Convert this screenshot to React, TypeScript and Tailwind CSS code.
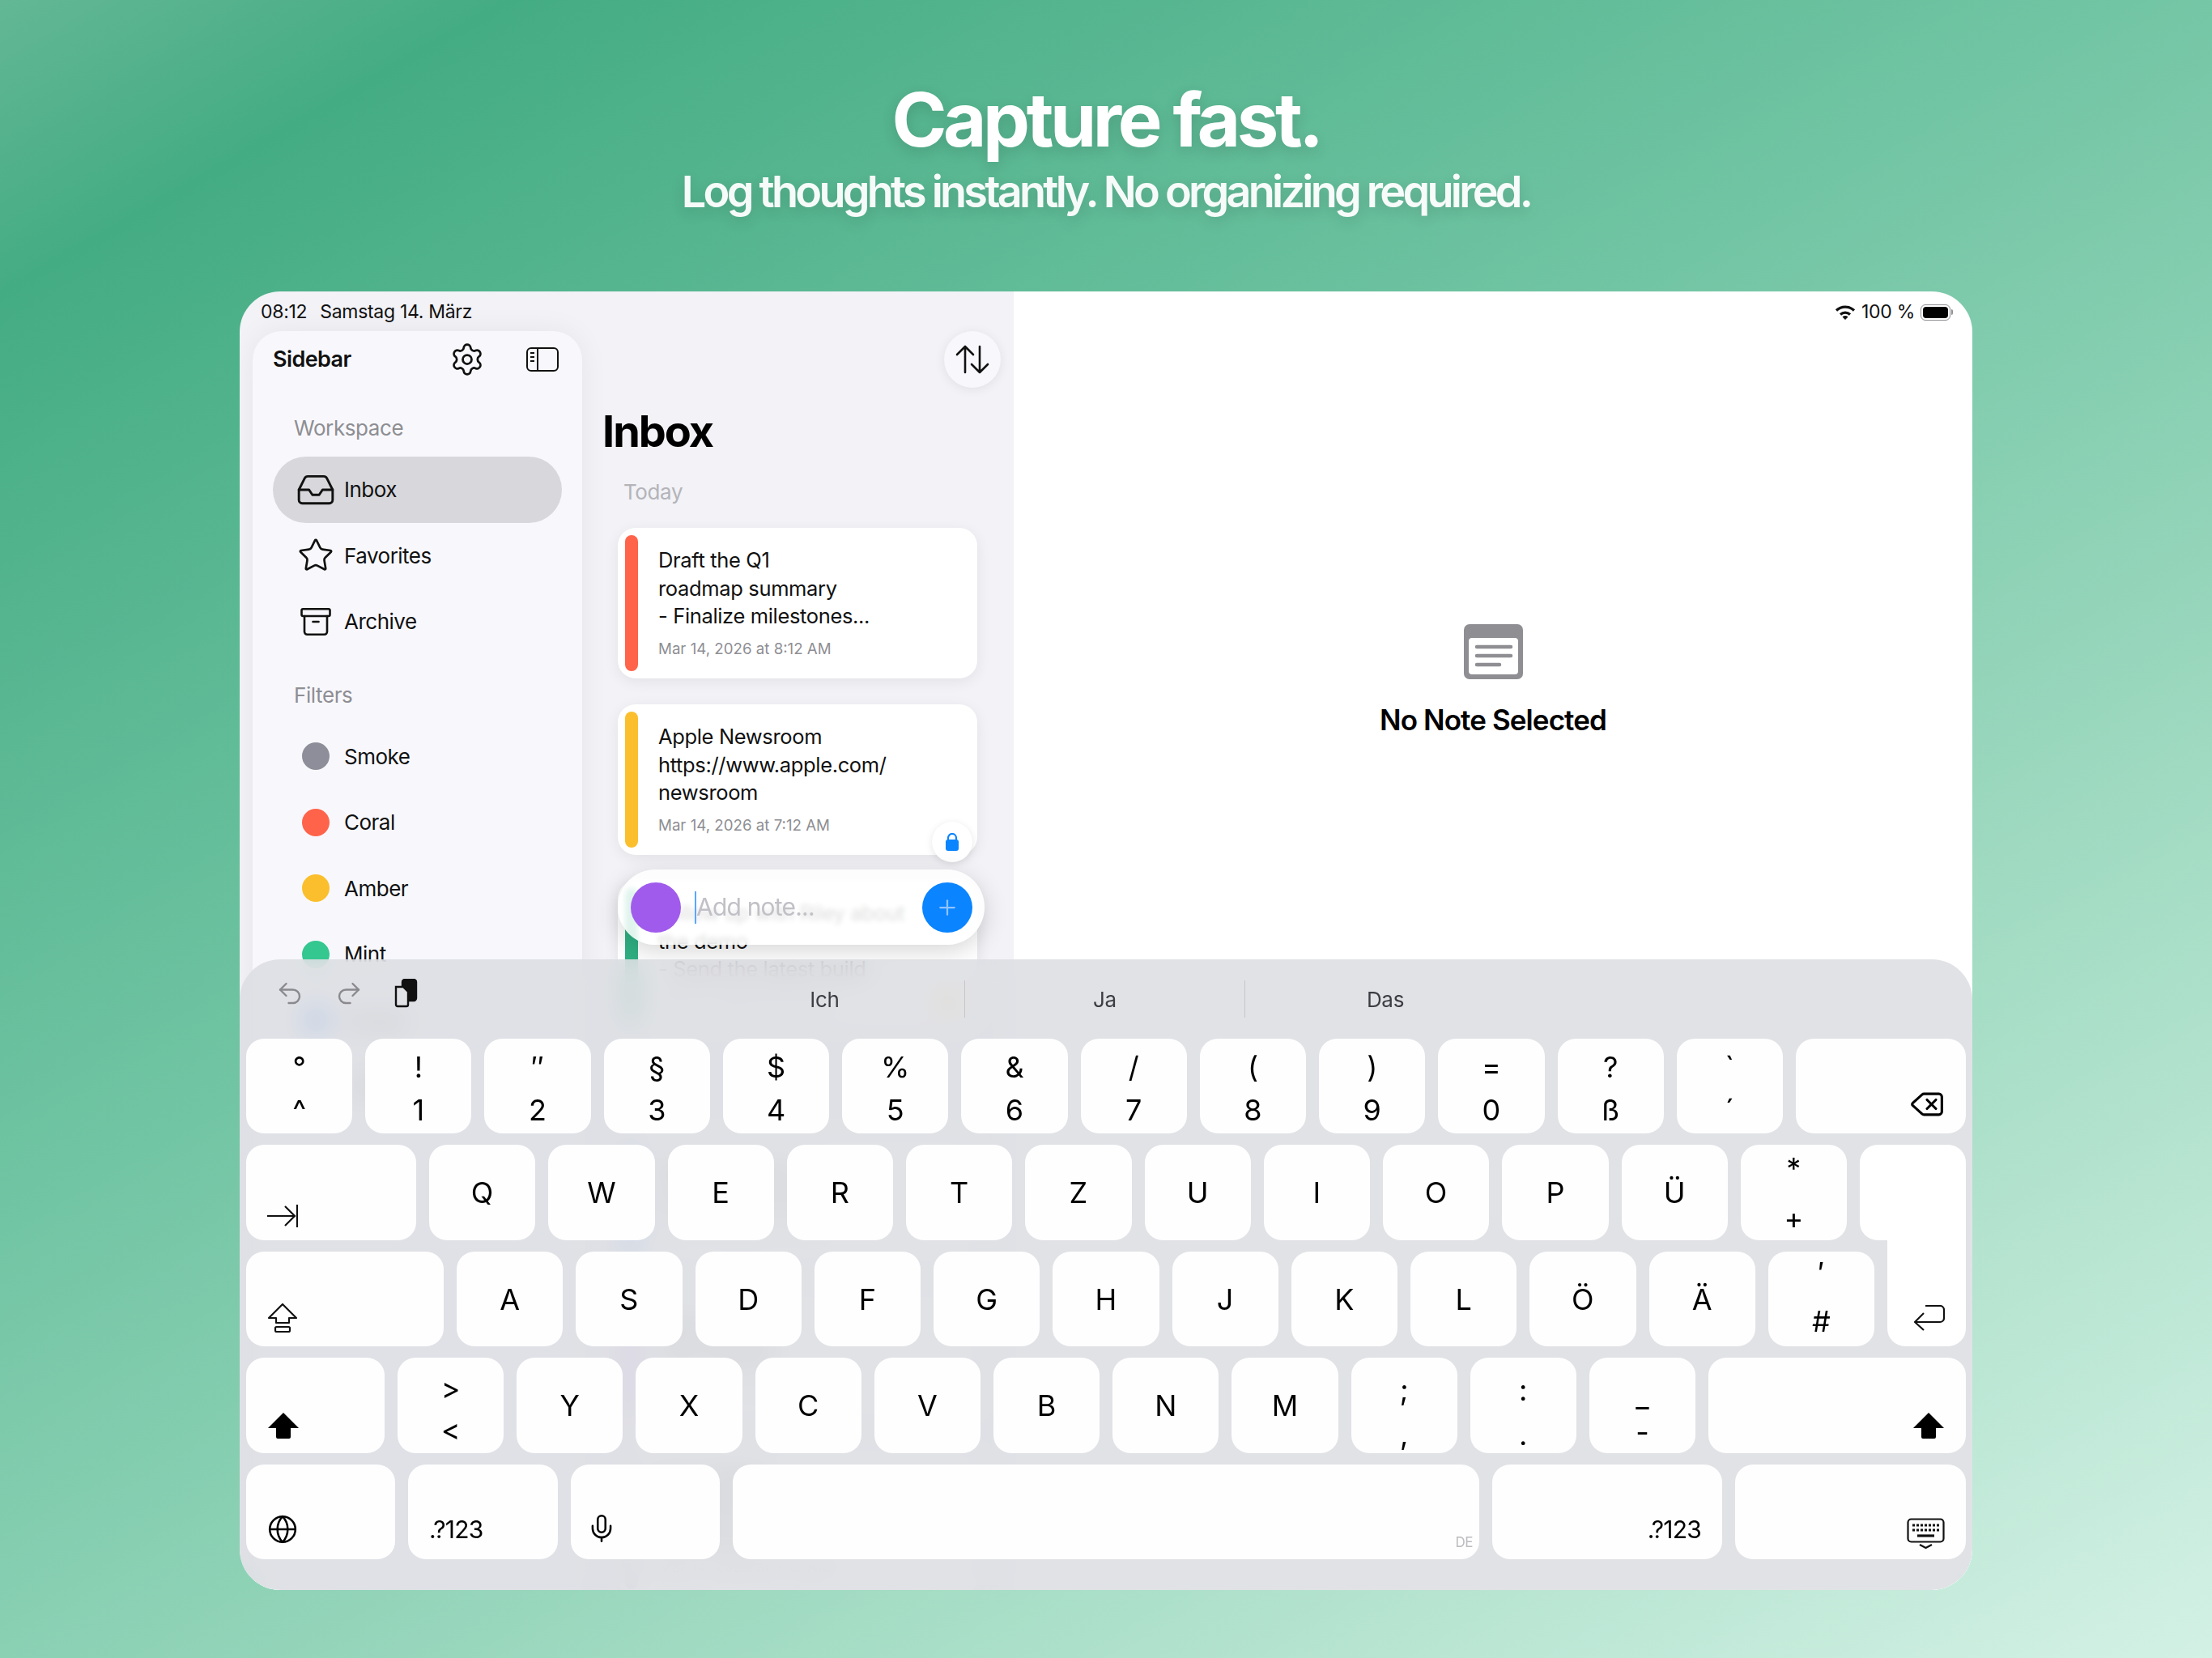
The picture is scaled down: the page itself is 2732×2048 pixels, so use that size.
import { Archive, Delete, Globe, Inbox, Mic, Plus, Redo2, Settings, Star, Undo2 } from "lucide-react"

const font = "font-['Inter','Liberation_Sans',sans-serif]"

function Row({ icon, label, active }: { icon: React.ReactNode; label: string; active?: boolean }) {
  return (
    <div className={`ml-[25px] flex h-[81.5px] w-[357px] items-center gap-[17px] rounded-full pl-[35px] ${active ? "bg-[#d8d8dc]" : ""}`}>
      <div className="flex w-[36px] justify-center">{icon}</div>
      <span className="text-[26px] tracking-[-0.5px] text-[#111]">{label}</span>
    </div>
  )
}

function Dot({ color }: { color: string }) {
  return <div className={`h-[34px] w-[34px] rounded-full ${color}`} />
}

function Note({ bar, lines, date, height, children }: { bar: string; lines: string[]; date: string; height: string; children?: React.ReactNode }) {
  return (
    <div className={`relative flex w-[444px] shrink-0 gap-[25px] rounded-[22px] bg-white p-[9px] shadow-[0_4px_18px_rgba(0,0,0,0.07)] ${height}`}>
      <div className={`w-[16px] rounded-full ${bar}`} />
      <div className="pt-[14px]">
        {lines.map((l) => (
          <div key={l} className="h-[34.5px] whitespace-nowrap text-[25.5px] leading-[34.5px] tracking-[-0.35px] text-[#111]">
            {l}
          </div>
        ))}
        <div className="mt-[9px] whitespace-nowrap text-[18.7px] text-[#8e8e93]">{date}</div>
      </div>
      {children}
    </div>
  )
}

function Key({ label, width, className }: { label: string; width?: string; className?: string }) {
  return (
    <div className={`flex h-full items-center justify-center rounded-[22px] bg-white/95 text-[36px] text-black ${width ?? "min-w-0 flex-1"} ${className ?? ""}`}>
      {label}
    </div>
  )
}

function DualKey({ top, bottom, spacing }: { top: string; bottom: string; spacing?: string }) {
  return (
    <div className={`flex h-full min-w-0 flex-1 flex-col items-center rounded-[22px] bg-white/95 text-[36px] leading-[44px] text-black ${spacing ?? "gap-[9px] pt-[13px]"}`}>
      <span className="h-[44px]">{top}</span>
      <span className="h-[44px]">{bottom}</span>
    </div>
  )
}

function EdgeKey({ width, right, children, className }: { width: string; right?: boolean; children: React.ReactNode; className?: string }) {
  return (
    <div className={`flex h-full items-end rounded-[22px] bg-white/95 text-black ${right ? "justify-end pr-[26px]" : "pl-[26px]"} ${width} ${className ?? ""}`}>
      {children}
    </div>
  )
}

function ShiftIcon() {
  return (
    <svg width="40" height="34" viewBox="0 0 40 34" fill="currentColor">
      <path d="M20 1 39 20H29V31a2 2 0 0 1-2 2H13a2 2 0 0 1-2-2V20H1Z" />
    </svg>
  )
}

export default function App() {
  return (
    <div className={`h-[2048px] w-[2732px] overflow-hidden bg-[linear-gradient(150deg,#63b795_0%,#44ac83_10%,#72c5a4_42%,#a4dcc4_72%,#d3f1e5_100%)] ${font}`}>
      <div className="flex h-[360px] flex-col items-center pt-[96px] text-white">
        <h1 className="text-[92px] leading-[104px] font-bold tracking-[-4.4px] [text-shadow:0_6px_18px_rgba(0,0,0,0.14)]">Capture fast.</h1>
        <p className="mt-[5px] text-[54px] leading-[64px] font-semibold tracking-[-3.75px] text-white/95 [text-shadow:0_6px_18px_rgba(0,0,0,0.14)]">
          Log thoughts instantly. No organizing required.
        </p>
      </div>

      <div className="relative mx-auto flex h-[1604px] w-[2140px] overflow-hidden rounded-[50px]">
        <div className="flex w-[956px] flex-col bg-[#f2f2f7]">
          <div className="flex h-[49px] shrink-0 items-center gap-[16px] pt-[2px] pl-[26px] text-[23px] tracking-[-0.3px] text-[#111]">
            <span>08:12</span>
            <span>Samstag 14. März</span>
          </div>
          <div className="flex flex-1">
            <aside className="ml-[16px] w-[407px] rounded-t-[36px] bg-[#f8f8fc] shadow-[0_0_36px_rgba(0,0,0,0.06)]">
              <div className="flex h-[70px] items-center pr-[29px] pl-[25px]">
                <span className="flex-1 text-[27px] font-semibold tracking-[-0.6px] text-[#111]">Sidebar</span>
                <Settings size={44} strokeWidth={1.5} className="mr-[51px] text-[#111]" />
                <svg width="40" height="30" viewBox="0 0 40 30" fill="none" stroke="#111" strokeWidth="2">
                  <rect x="1" y="1" width="38" height="28" rx="5" />
                  <path d="M14 1v28" />
                  <path d="M5 7h5M5 12h5M5 17h5" />
                </svg>
              </div>
              <div className="mt-[30px] h-[40px] pl-[51px] text-[26px] leading-[40px] tracking-[-0.4px] text-[#8e8e93]">Workspace</div>
              <div className="mt-[15px]">
                <Row active label="Inbox" icon={<Inbox size={50} strokeWidth={1.4} className="shrink-0 text-[#111]" />} />
                <Row label="Favorites" icon={<Star size={46} strokeWidth={1.4} className="shrink-0 text-[#111]" />} />
                <Row label="Archive" icon={<Archive size={42} strokeWidth={1.5} className="shrink-0 text-[#111]" />} />
              </div>
              <div className="mt-[30px] h-[40px] pl-[51px] text-[26px] leading-[40px] tracking-[-0.4px] text-[#8e8e93]">Filters</div>
              <div className="mt-[15px]">
                <Row label="Smoke" icon={<Dot color="bg-[#8e8e9a]" />} />
                <Row label="Coral" icon={<Dot color="bg-[#ff634a]" />} />
                <Row label="Amber" icon={<Dot color="bg-[#fbbf2d]" />} />
                <Row label="Mint" icon={<Dot color="bg-[#34c78f]" />} />
                <Row label="Ocean" icon={<Dot color="bg-[#2f8dff]" />} />
                <Row label="Lilac" icon={<Dot color="bg-[#f5a8f0]" />} />
              </div>
            </aside>

            <main className="relative flex-1">
              <div className="flex h-[70px] justify-end pr-[16px]">
                <div className="flex h-[70px] w-[70px] items-center justify-center rounded-full bg-[#f8f8fc] shadow-[0_2px_14px_rgba(0,0,0,0.08)]">
                  <svg width="42" height="36" viewBox="0 0 42 36" fill="none" stroke="#111" strokeWidth="2.6" strokeLinecap="round" strokeLinejoin="round">
                    <path d="M12 34V2M2 12 12 2l10 10" />
                    <path d="M30 2v32M20 24l10 10 10-10" />
                  </svg>
                </div>
              </div>
              <h2 className="mt-[22px] ml-[25px] h-[64px] text-[54px] leading-[64px] font-bold tracking-[-2px] text-black">Inbox</h2>
              <div className="mt-[26px] ml-[51px] h-[34px] text-[26px] leading-[34px] tracking-[-0.4px] text-[#b4b4b9]">Today</div>
              <div className="mt-[27px] ml-[44px] flex flex-col">
                <Note
                  bar="bg-[#ff634a]"
                  height="h-[186px]"
                  lines={["Draft the Q1", "roadmap summary", "- Finalize milestones..."]}
                  date="Mar 14, 2026 at 8:12 AM"
                />
                <div className="h-[32px] shrink-0" />
                <Note
                  bar="bg-[#fbbf2d]"
                  height="h-[186px]"
                  lines={["Apple Newsroom", "https://www.apple.com/", "newsroom"]}
                  date="Mar 14, 2026 at 7:12 AM"
                >
                  <div className="absolute top-[145px] right-[6px] flex h-[50px] w-[50px] items-center justify-center rounded-full bg-white shadow-[0_2px_10px_rgba(0,0,0,0.1)]">
                    <svg width="16" height="22" viewBox="0 0 16 22">
                      <path d="M3 9V6a5 5 0 0 1 10 0v3" fill="none" stroke="#0a84ff" strokeWidth="2.2" />
                      <rect x="0" y="8" width="16" height="14" rx="3" fill="#0a84ff" />
                    </svg>
                  </div>
                </Note>
                <div className="h-[32px] shrink-0" />
                <Note
                  bar="bg-[#2fb083]"
                  height="h-[186px]"
                  lines={["Follow up with Riley about", "the demo", "- Send the latest build"]}
                  date="Mar 14, 2026 at 6:12 AM"
                >
                  <Star size={30} className="absolute top-[134px] right-[22px] fill-[#fbbf2d] text-[#fbbf2d]" />
                </Note>
                <div className="h-[132px] shrink-0" />
                <Note bar="bg-[#4a9dff]" height="h-[160px]" lines={["Weekly check-in", "notes for the team"]} date="Mar 14, 2026 at 5:12 AM" />
                <div className="h-[30px] shrink-0" />
                <Note bar="bg-[#b98cf5]" height="h-[160px]" lines={["Ideas for the", "next release"]} date="Mar 14, 2026 at 4:12 AM" />
                <div className="h-[30px] shrink-0" />
                <Note bar="bg-[#d6d6da]" height="h-[186px]" lines={["Book flights", "and hotel", "for the trip"]} date="Mar 14, 2026 at 3:12 AM" />
              </div>

              <div className="absolute top-[665px] left-[44px] flex h-[93px] w-[453px] items-center rounded-full bg-white/85 pr-[15px] pl-[16px] shadow-[0_8px_30px_rgba(0,0,0,0.16)] backdrop-blur-[3px]">
                <div className="h-[62px] w-[62px] rounded-full bg-[#a05bec]" />
                <div className="ml-[17px] h-[40px] w-[2px] bg-[#5aa7ff]" />
                <span className="flex-1 text-[30px] tracking-[-0.8px] text-[#c0c0c6]">Add note...</span>
                <div className="flex h-[62px] w-[62px] items-center justify-center rounded-full bg-[#0a84ff]">
                  <Plus size={30} strokeWidth={1.8} className="text-[#8fc4ff]" />
                </div>
              </div>
            </main>
          </div>
        </div>

        <div className="flex flex-1 flex-col bg-white">
          <div className="flex h-[49px] shrink-0 items-center justify-end gap-[7px] pt-[2px] pr-[24px]">
            <svg width="26" height="20" viewBox="0 0 26 20" fill="none" stroke="#111" strokeWidth="3.2">
              <path d="M2 7.5a16 16 0 0 1 22 0" />
              <path d="M7 12.5a9 9 0 0 1 12 0" />
              <path d="M13 19 9.5 15.5a5 5 0 0 1 7 0Z" fill="#111" stroke="none" />
            </svg>
            <span className="text-[23px] tracking-[-0.3px] text-[#111]">100 %</span>
            <div className="flex items-center">
              <div className="h-[20px] w-[37px] rounded-[6px] border border-[#8e8e93] p-[2px]">
                <div className="h-full w-full rounded-[4px] bg-black" />
              </div>
              <div className="ml-[1px] h-[7px] w-[2px] rounded-r-full bg-[#8e8e93]" />
            </div>
          </div>
          <div className="flex flex-col items-center pt-[362px]">
            <svg width="73" height="68" viewBox="0 0 73 68">
              <rect width="73" height="68" rx="7" fill="#8e8e93" />
              <rect x="6" y="17" width="61" height="45" rx="4" fill="#fff" />
              <path d="M16 28h42M16 39h42M16 50h28" stroke="#8e8e93" strokeWidth="4.5" strokeLinecap="round" />
            </svg>
            <div className="mt-[24px] text-[35px] font-semibold tracking-[-0.9px] text-black">No Note Selected</div>
          </div>
        </div>

        <div className="absolute inset-x-0 top-[825px] bottom-0 flex flex-col rounded-t-[50px] rounded-b-[50px] bg-[#dcdde2]/85 px-[8px] backdrop-blur-[16px]">
          <div className="flex h-[98px] items-center">
            <div className="flex w-[542px] items-center gap-[37px] pb-[14px] pl-[36px] text-[#8a8a8e]">
              <Undo2 size={36} strokeWidth={1.6} />
              <Redo2 size={36} strokeWidth={1.6} />
              <svg width="30" height="36" viewBox="0 0 30 36" fill="none" stroke="#111" strokeWidth="2.4">
                <rect x="11" y="1" width="17" height="26" rx="3" fill="#111" />
                <path d="M3 10h9l6 6v16a2 2 0 0 1-2 2H5a2 2 0 0 1-2-2Z" fill="#e2e3e7" />
              </svg>
            </div>
            <div className="flex h-[46px] w-[346px] items-center justify-center border-r border-[#c6c6ca] text-[26px] tracking-[-0.3px] text-[#3c3c43]">Ich</div>
            <div className="flex h-[46px] w-[346px] items-center justify-center border-r border-[#c6c6ca] text-[26px] tracking-[-0.3px] text-[#3c3c43]">Ja</div>
            <div className="flex h-[46px] w-[346px] items-center justify-center text-[26px] tracking-[-0.3px] text-[#3c3c43]">Das</div>
          </div>

          <div className="flex flex-col gap-[14px]">
            <div className="flex h-[117px] gap-[16px]">
              <DualKey top="°" bottom="^" />
              <DualKey top="!" bottom="1" />
              <DualKey top="″" bottom="2" />
              <DualKey top="§" bottom="3" />
              <DualKey top="$" bottom="4" />
              <DualKey top="%" bottom="5" />
              <DualKey top="&" bottom="6" />
              <DualKey top="/" bottom="7" />
              <DualKey top="(" bottom="8" />
              <DualKey top=")" bottom="9" />
              <DualKey top="=" bottom="0" />
              <DualKey top="?" bottom="ß" />
              <DualKey top="`" bottom="´" />
              <EdgeKey width="w-[210px]" right className="pb-[14px]">
                <Delete size={44} strokeWidth={1.7} />
              </EdgeKey>
            </div>

            <div className="flex h-[118px] gap-[16px]">
              <EdgeKey width="w-[210px]" className="pb-[16px]">
                <svg width="38" height="28" viewBox="0 0 38 28" fill="none" stroke="#111" strokeWidth="2.2">
                  <path d="M0 14h34M22 2l12 12-12 12M37 0v28" />
                </svg>
              </EdgeKey>
              {["Q", "W", "E", "R", "T", "Z", "U", "I", "O", "P", "Ü"].map((k) => (
                <Key key={k} label={k} />
              ))}
              <DualKey top="*" bottom="+" spacing="gap-[18px] pt-[7px]" />
              <div className="relative z-10 h-[118px] w-[131px] rounded-t-[22px] rounded-bl-[22px] bg-white" />
            </div>

            <div className="flex h-[117px] gap-[16px]">
              <EdgeKey width="w-[244px]" className="pb-[17px]">
                <svg width="38" height="37" viewBox="0 0 38 37" fill="none" stroke="#111" strokeWidth="2.2" strokeLinejoin="round">
                  <path d="M19 2 36 19H27V25H11V19H2Z" />
                  <rect x="10" y="30" width="18" height="6" rx="1.5" />
                </svg>
              </EdgeKey>
              {["A", "S", "D", "F", "G", "H", "J", "K", "L", "Ö", "Ä"].map((k) => (
                <Key key={k} label={k} />
              ))}
              <DualKey top="′" bottom="#" spacing="gap-[16px] pt-[4px]" />
              <div className="relative z-10 mt-[-30px] flex h-[147px] w-[97px] items-end justify-end rounded-b-[22px] bg-white pr-[26px] pb-[19px]">
                <svg width="38" height="32" viewBox="0 0 38 32" fill="none" stroke="#111" strokeWidth="2.2">
                  <path d="M14 1h18a5 5 0 0 1 5 5v10a5 5 0 0 1-5 5H1M12 10 1 21l11 10" />
                </svg>
              </div>
            </div>

            <div className="flex h-[118px] gap-[16px]">
              <EdgeKey width="w-[171px]" className="pb-[17px]">
                <ShiftIcon />
              </EdgeKey>
              <DualKey top=">" bottom="<" spacing="gap-[7px] pt-[16px]" />
              {["Y", "X", "C", "V", "B", "N", "M"].map((k) => (
                <Key key={k} label={k} />
              ))}
              <DualKey top=";" bottom="," spacing="gap-[11px] pt-[18px]" />
              <DualKey top=":" bottom="." spacing="gap-[11px] pt-[18px]" />
              <DualKey top="_" bottom="-" spacing="gap-[0px] pt-[26px]" />
              <EdgeKey width="w-[318px]" right className="pb-[17px]">
                <ShiftIcon />
              </EdgeKey>
            </div>

            <div className="flex h-[117px] gap-[16px]">
              <EdgeKey width="w-[184px]" className="pb-[18px]">
                <Globe size={38} strokeWidth={1.6} />
              </EdgeKey>
              <EdgeKey width="w-[185px]" className="pb-[14px] text-[30px] tracking-[-0.8px]">
                .?123
              </EdgeKey>
              <EdgeKey width="w-[184px]" className="pb-[19px]">
                <Mic size={38} strokeWidth={1.6} className="ml-[-7px]" />
              </EdgeKey>
              <div className="relative h-full w-[922px] rounded-[22px] bg-white/95">
                <span className="absolute right-[8px] bottom-[8px] text-[17px] tracking-[-0.5px] text-[#bcbcc0]">DE</span>
              </div>
              <EdgeKey width="w-[284px]" right className="pb-[14px] text-[30px] tracking-[-0.8px]">
                .?123
              </EdgeKey>
              <EdgeKey width="w-[285px]" right className="pb-[12px]">
                <svg width="47" height="39" viewBox="0 0 47 39" fill="none" stroke="#111" strokeWidth="2.2">
                  <rect x="1.5" y="1.5" width="44" height="28" rx="4" />
                  <path d="M7 9h33M7 15h33" strokeWidth="3.2" strokeDasharray="3 2" />
                  <path d="M13 22h21" strokeWidth="3.2" />
                  <path d="M16 33l7.5 4 7.5-4" strokeWidth="2.4" />
                </svg>
              </EdgeKey>
            </div>
          </div>
        </div>
      </div>
    </div>
  )
}
